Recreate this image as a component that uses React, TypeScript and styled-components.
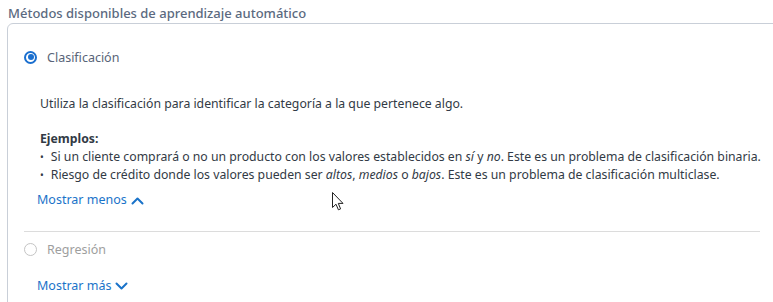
import styled, { createGlobalStyle } from "styled-components";

const Global = createGlobalStyle`
  html, body {
    margin: 0;
    padding: 0;
    background: #ffffff;
    overflow: hidden;
  }
  body {
    font-family: "Noto Sans", "Open Sans", sans-serif;
    color: #323a45;
  }
`;

const Page = styled.div`
  position: relative;
  width: 773px;
  height: 302px;
  overflow: hidden;
  padding-top: 5px;
  box-sizing: border-box;
`;

const Legend = styled.div`
  margin-left: 8px;
  font-size: 13px;
  line-height: 17px;
  color: #5b6a80;
  font-weight: 500;
`;

const Box = styled.div`
  margin-left: 7px;
  margin-top: 1px;
  width: 770px;
  height: 320px;
  box-sizing: border-box;
  border: 1px solid #c9cfd8;
  border-radius: 6px 0 0 0;
  padding: 23px 16px 0;
`;

const Option = styled.div`
  display: flex;
  align-items: center;
  gap: 10px;
  height: 20px;
`;

const Radio = styled.span<{ $checked?: boolean; $disabled?: boolean }>`
  width: 13px;
  height: 13px;
  border-radius: 50%;
  box-sizing: border-box;
  border: ${({ $checked, $disabled }) =>
    $disabled ? "1.5px solid #c4c4c4" : $checked ? "2px solid #1a6fcf" : "1.5px solid #7a8494"};
  display: flex;
  align-items: center;
  justify-content: center;
  &::after {
    content: "";
    width: 6px;
    height: 6px;
    border-radius: 50%;
    background: #1a6fcf;
    display: ${({ $checked }) => ($checked ? "block" : "none")};
  }
`;

const OptionLabel = styled.span<{ $disabled?: boolean }>`
  font-size: 12.5px;
  color: ${({ $disabled }) => ($disabled ? "#9e9e9e" : "#586478")};
`;

const Details = styled.div`
  padding-left: 16px;
  font-size: 12.25px;
  line-height: 18px;
  color: #323a45;
  white-space: nowrap;
`;

const Description = styled.p`
  margin: 28px 0 0;
`;

const ExamplesTitle = styled.div`
  margin-top: 17px;
  font-weight: 700;
`;

const Bullets = styled.ul`
  margin: 0;
  padding: 0;
  list-style: none;
  li {
    display: flex;
    gap: 7px;
  }
  li::before {
    content: "•";
    font-size: 10px;
  }
`;

const Toggle = styled.a<{ $gap: number }>`
  display: inline-flex;
  align-items: center;
  gap: 4px;
  margin-top: ${({ $gap }) => $gap}px;
  margin-left: -3px;
  font-size: 12.5px;
  line-height: 18px;
  color: #1a73c9;
  text-decoration: none;
  cursor: pointer;
`;

const Divider = styled.hr`
  margin: 22px 0 7px;
  border: none;
  border-top: 1px solid #dcdcdc;
`;

const Cursor = styled.svg`
  position: absolute;
  left: 332px;
  top: 192px;
`;

function Chevron({ up }: { up?: boolean }) {
  return (
    <svg width="13" height="9" viewBox="0 0 13 9" fill="none">
      <path
        d={up ? "M1.5 7.5 L6.5 2.5 L11.5 7.5" : "M1.5 1.5 L6.5 6.5 L11.5 1.5"}
        stroke="#1a73c9"
        strokeWidth="2"
        strokeLinecap="round"
        strokeLinejoin="round"
      />
    </svg>
  );
}

export default function App() {
  return (
    <>
      <Global />
      <Page>
        <Legend>Métodos disponibles de aprendizaje automático</Legend>
        <Box>
          <Option>
            <Radio $checked />
            <OptionLabel>Clasificación</OptionLabel>
          </Option>
          <Details>
            <Description>
              Utiliza la clasificación para identificar la categoría a la que pertenece algo.
            </Description>
            <ExamplesTitle>Ejemplos:</ExamplesTitle>
            <Bullets>
              <li>
                <span>
                  Si un cliente comprará o no un producto con los valores establecidos en <i>sí</i> y{" "}
                  <i>no</i>. Este es un problema de clasificación binaria.
                </span>
              </li>
              <li>
                <span>
                  Riesgo de crédito donde los valores pueden ser <i>altos</i>, <i>medios</i> o{" "}
                  <i>bajos</i>. Este es un problema de clasificación multiclase.
                </span>
              </li>
            </Bullets>
            <Toggle $gap={7}>
              Mostrar menos <Chevron up />
            </Toggle>
          </Details>
          <Divider />
          <Option>
            <Radio $disabled />
            <OptionLabel $disabled>Regresión</OptionLabel>
          </Option>
          <Details>
            <Toggle $gap={18}>
              Mostrar más <Chevron />
            </Toggle>
          </Details>
        </Box>
        <Cursor width="12" height="19" viewBox="0 0 12 19">
          <path
            d="M0.5 0.5 L0.5 15.5 L4 12.2 L6.4 17.8 L8.6 16.9 L6.3 11.4 L11 11.4 Z"
            fill="#ffffff"
            stroke="#222"
            strokeWidth="1"
            strokeLinejoin="miter"
          />
        </Cursor>
      </Page>
    </>
  );
}
